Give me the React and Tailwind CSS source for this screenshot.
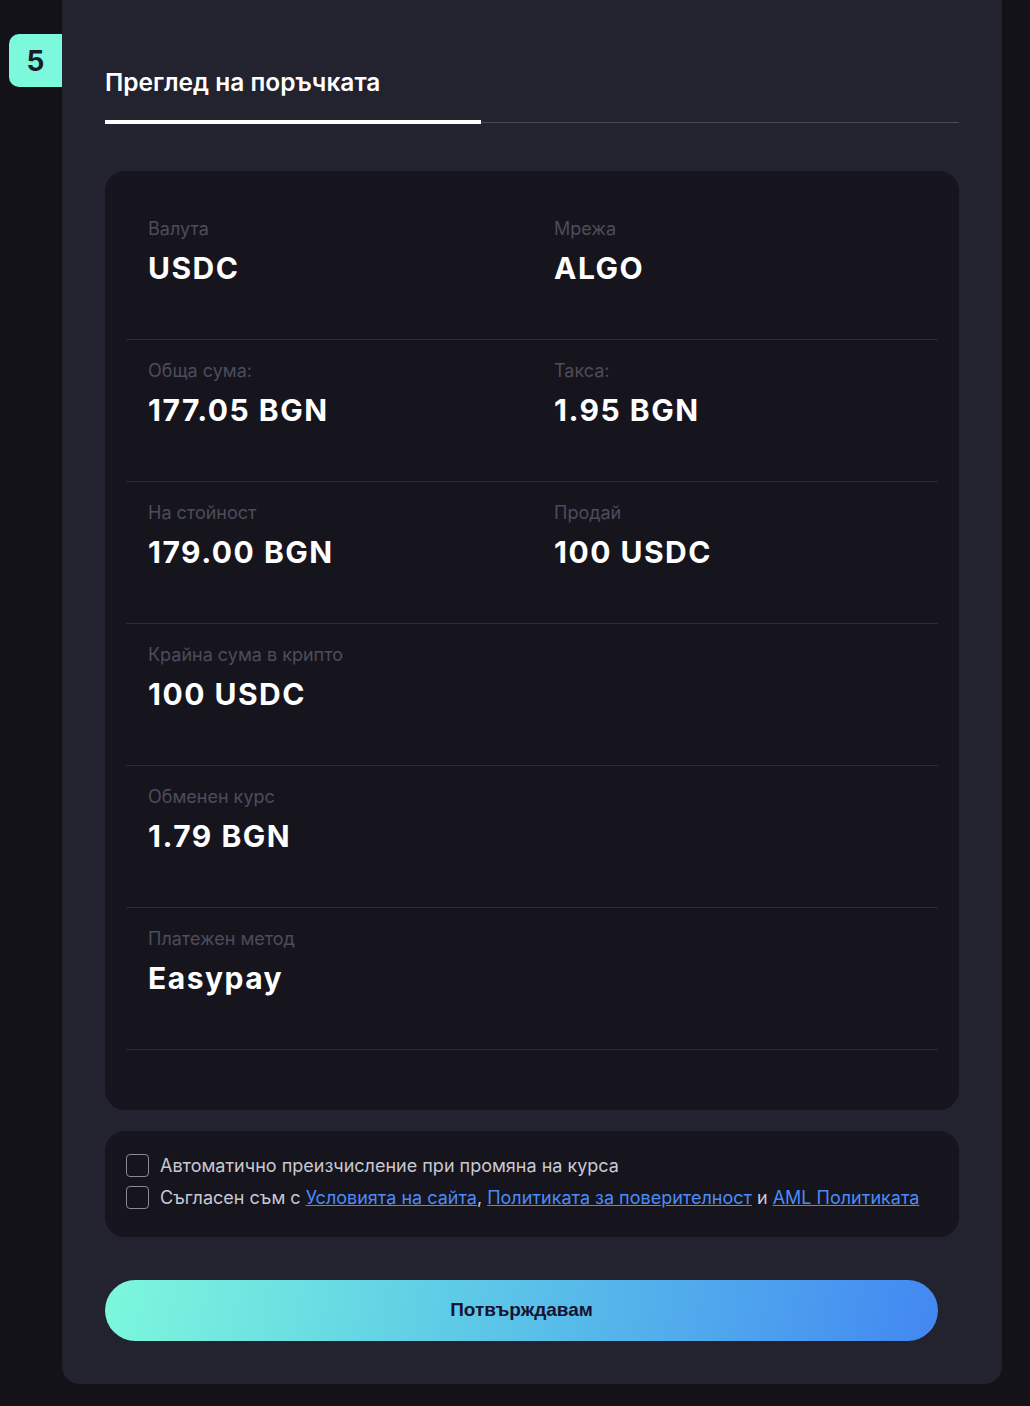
export default function App() {
  const rows = [
    [
      { label: "Валута", value: "USDC" },
      { label: "Мрежа", value: "ALGO" },
    ],
    [
      { label: "Обща сума:", value: "177.05 BGN" },
      { label: "Такса:", value: "1.95 BGN" },
    ],
    [
      { label: "На стойност", value: "179.00 BGN" },
      { label: "Продай", value: "100 USDC" },
    ],
    [{ label: "Крайна сума в крипто", value: "100 USDC" }],
    [{ label: "Обменен курс", value: "1.79 BGN" }],
    [{ label: "Платежен метод", value: "Easypay" }],
  ];

  return (
    <div className="min-h-[1406px] bg-[#131218] font-['Inter',sans-serif] flex">
      <div className="w-[62px] shrink-0 pt-[34px] flex justify-end">
        <div className="w-[53px] h-[53px] bg-[#7cf8dc] rounded-l-[10px] flex items-center justify-center text-[28px] font-bold text-[#1b1a24]">
          5
        </div>
      </div>

      <div className="w-[940px] h-[1384px] bg-[#23222f] rounded-b-[18px] px-[43px] pt-[64px]">
        <div className="relative h-[60px]">
          <h2 className="text-[24.5px] font-semibold text-white leading-[36px]">Преглед на поръчката</h2>
          <div className="absolute left-0 right-0 top-[58px] h-px bg-[#4a4957]" />
          <div className="absolute left-0 w-[376px] top-[56px] h-[4px] bg-white" />
        </div>

        <div className="mt-[47px] bg-[#16151d] rounded-[20px] px-[21px] pt-[27px] pb-[60px]">
          {rows.map((row, i) => (
            <div key={i} className="grid grid-cols-2 h-[142px] border-b border-[#2c2b38] pt-[21px]">
              {row.map((c) => (
                <div key={c.label} className="px-[22px]">
                  <p className="text-[18px] leading-[20px] text-[#4d4c5c]">{c.label}</p>
                  <p className="mt-[9px] text-[30px] leading-[40px] font-bold text-white tracking-[0.05em]">{c.value}</p>
                </div>
              ))}
            </div>
          ))}
        </div>

        <div className="mt-[21px] bg-[#16151d] rounded-[20px] px-[21px] pt-[23px] pb-[28px] flex flex-col gap-[9px] text-[18px] text-[#c9c8d2] leading-[22px]">
          <label className="flex items-center gap-[11px]">
            <span className="w-[23px] h-[23px] rounded-[4px] border border-[#8a8996] shrink-0" />
            <span>Автоматично преизчисление при промяна на курса</span>
          </label>
          <label className="flex items-center gap-[11px]">
            <span className="w-[23px] h-[23px] rounded-[4px] border border-[#8a8996] shrink-0" />
            <span>
              Съгласен съм с <a className="text-[#4c8bf5] underline">Условията на сайта</a>,{" "}
              <a className="text-[#4c8bf5] underline">Политиката за поверителност</a> и{" "}
              <a className="text-[#4c8bf5] underline">AML Политиката</a>
            </span>
          </label>
        </div>

        <button className="mt-[43px] w-[833px] h-[61px] rounded-full bg-[linear-gradient(100deg,#7cf8dc_0%,#5fcde6_40%,#4287f2_100%)] text-[#141433] font-bold text-[19px] font-['Liberation_Sans',sans-serif]">
          Потвърждавам
        </button>
      </div>
    </div>
  );
}
